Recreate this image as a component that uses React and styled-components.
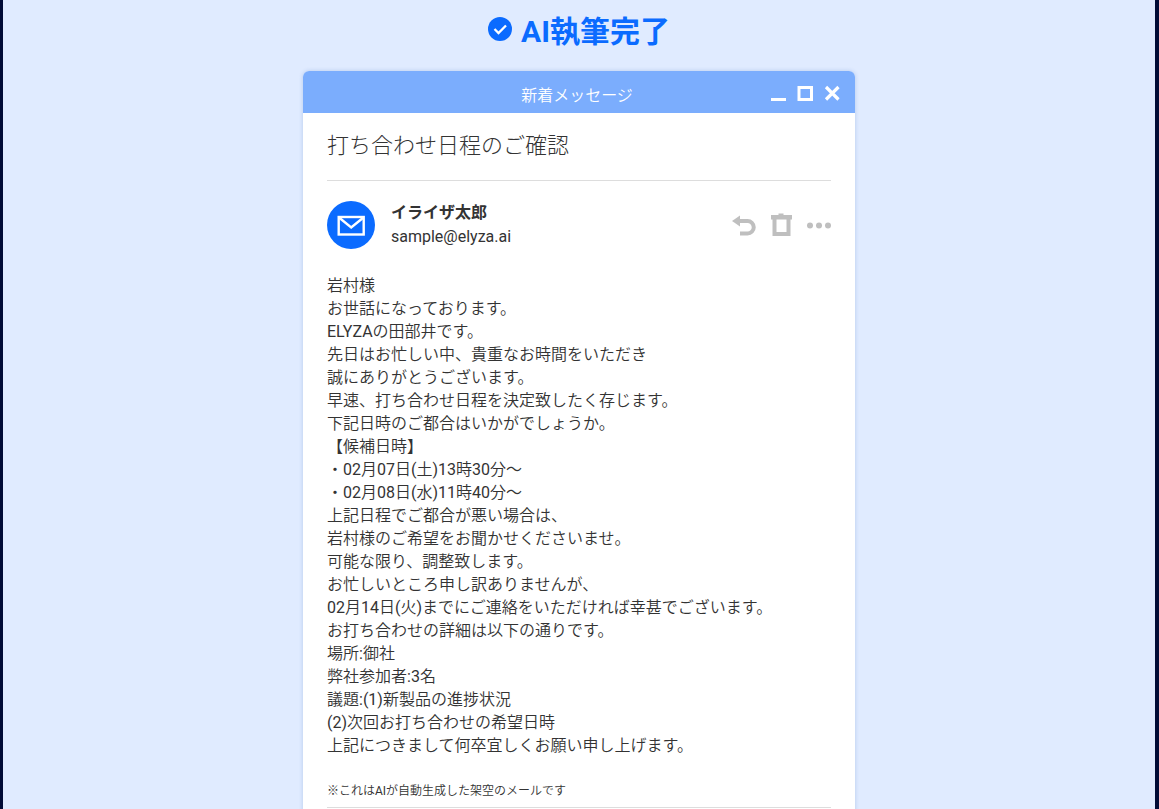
import React from "react";
import styled, { createGlobalStyle } from "styled-components";

const GlobalStyles = createGlobalStyle`
  * {
    box-sizing: border-box;
  }

  body {
    margin: 0;
    background: #000b36;
    color: #333;
    font-family: Roboto, "Noto Sans CJK JP", sans-serif;
    font-size: 16px;
  }
`;

const Page = styled.main`
  min-height: 100vh;
  margin: 0 4px 0 3px;
  padding: 8px 24px 0;
  background: #e0ebff;
`;

const Heading = styled.h1`
  display: flex;
  justify-content: center;
  gap: 8px;
  margin: 0 0 15px;
  color: #0b6bff;
  font-size: 30px;
  font-weight: 700;
  line-height: 48px;

  svg {
    margin-top: 9px;
  }
`;

const Card = styled.article`
  max-width: 552px;
  margin: 0 auto;
  background: #fff;
  border-radius: 6px;
  box-shadow: 0 0 4px rgba(40, 90, 180, 0.24);
  overflow: hidden;
`;

const TitleBar = styled.header`
  display: grid;
  grid-template-columns: 1fr auto 1fr;
  align-items: center;
  padding: 10px 15px 2px 11px;
  background: #7badfd;
  color: #fff;
`;

const BarTitle = styled.span`
  grid-column: 2;
  font-weight: 350;
  line-height: 30px;
`;

const Buttons = styled.div`
  display: flex;
  justify-content: flex-end;
  align-items: center;
  gap: ${(props) => props.$gap};
`;

const WindowButtons = styled(Buttons)`
  align-self: start;
  padding-top: 4px;
`;

const IconButton = styled.button`
  display: block;
  padding: 0;
  border: 0;
  background: none;
  color: inherit;
  cursor: pointer;

  svg {
    display: block;
  }
`;

const Content = styled.div`
  padding: 0 24px 24px;
`;

const Subject = styled.h2`
  margin: 0;
  padding: 17px 0 18px;
  border-bottom: 1px solid #ddd;
  font-size: 22px;
  font-weight: 300;
  line-height: 32px;
`;

const Sender = styled.div`
  display: flex;
  align-items: center;
  gap: 16px;
  padding: 20px 0 25px;
  color: #bfbfbf;
`;

const Address = styled.div`
  flex: 1;
  color: #333;
  line-height: 24px;

  strong,
  a {
    display: block;
  }

  a {
    color: inherit;
    text-decoration: none;
  }
`;

const Body = styled.div`
  line-height: 23px;

  p {
    margin: 0;
  }
`;

const Note = styled.p`
  margin: 0;
  padding: 24px 0 6px;
  border-bottom: 1px solid #ddd;
  font-size: 12px;
  line-height: 20px;
`;

// kanji and kana are set a little lighter than the latin letters
const Japanese = styled.span`
  font-weight: 350;
`;

const lines = [
  "岩村様",
  "お世話になっております。",
  "ELYZAの田部井です。",
  "先日はお忙しい中、貴重なお時間をいただき",
  "誠にありがとうございます。",
  "早速、打ち合わせ日程を決定致したく存じます。",
  "下記日時のご都合はいかがでしょうか。",
  "【候補日時】",
  "・02月07日(土)13時30分〜",
  "・02月08日(水)11時40分〜",
  "上記日程でご都合が悪い場合は、",
  "岩村様のご希望をお聞かせくださいませ。",
  "可能な限り、調整致します。",
  "お忙しいところ申し訳ありませんが、",
  "02月14日(火)までにご連絡をいただければ幸甚でございます。",
  "お打ち合わせの詳細は以下の通りです。",
  "場所:御社",
  "弊社参加者:3名",
  "議題:(1)新製品の進捗状況",
  "(2)次回お打ち合わせの希望日時",
  "上記につきまして何卒宜しくお願い申し上げます。",
];

function Text({ children }) {
  return children
    .split(/([\x20-\x7e]+)/)
    .filter(Boolean)
    .map((part, i) =>
      /[\x20-\x7e]/.test(part) ? part : <Japanese key={i}>{part}</Japanese>
    );
}

function CheckIcon() {
  return (
    <svg width="25" height="25" viewBox="0 0 25 25" aria-hidden="true">
      <circle cx="12" cy="12" r="12" fill="currentColor" />
      <path d="M6.500 12l4 4 7.500-7.500" fill="none" stroke="#fff" strokeWidth="2.3" />
    </svg>
  );
}

function MinimizeIcon() {
  return (
    <svg width="15" height="16" viewBox="0 0 15 16" aria-hidden="true">
      <path d="M0 13h15v3H0z" fill="currentColor" />
    </svg>
  );
}

function MaximizeIcon() {
  return (
    <svg width="16" height="16" viewBox="0 0 16 16" aria-hidden="true">
      <path d="M2 2.500h12.500v12H2z" fill="none" stroke="currentColor" strokeWidth="3" />
    </svg>
  );
}

function CloseIcon() {
  return (
    <svg width="16" height="16" viewBox="0 0 16 16" aria-hidden="true">
      <path
        d="M2 2l12.500 12.500m0-12.500L2 14.500"
        stroke="currentColor"
        strokeWidth="3.2"
      />
    </svg>
  );
}

function MailIcon() {
  return (
    <svg width="48" height="48" viewBox="0 0 48 48" aria-hidden="true">
      <circle cx="24" cy="24" r="24" fill="#0b6bff" />
      <g fill="none" stroke="#fff" strokeWidth="2.4">
        <rect x="11.700" y="16" width="25" height="17.500" />
        <path d="M12 16.500l12.200 10L36.500 16.500" />
      </g>
    </svg>
  );
}

function ReplyIcon() {
  return (
    <svg width="24" height="24" viewBox="0 0 24 24" aria-hidden="true">
      <path d="M0 8L8 2.500v11z" fill="currentColor" />
      <path
        d="M7 8h8.500a6.200 6.200 0 0 1 0 12.500H8"
        fill="none"
        stroke="currentColor"
        strokeWidth="4"
      />
    </svg>
  );
}

function TrashIcon() {
  return (
    <svg width="22" height="24" viewBox="0 0 22 24" aria-hidden="true">
      <path
        fill="currentColor"
        fillRule="evenodd"
        d="M8.500.5h5V2H22v4.500h-1.500V23H2.500V6.500H1V2h7.500zM6.500 6.500V19h10V6.500z"
      />
    </svg>
  );
}

function MoreIcon() {
  return (
    <svg width="25" height="24" viewBox="0 0 25 24" aria-hidden="true">
      <g fill="currentColor">
        <circle cx="4" cy="12.500" r="3" />
        <circle cx="13" cy="12.500" r="3" />
        <circle cx="22" cy="12.500" r="3" />
      </g>
    </svg>
  );
}

function App() {
  return (
    <>
      <GlobalStyles />
      <Page lang="ja">
        <Heading>
          <CheckIcon />
          AI執筆完了
        </Heading>
        <Card>
          <TitleBar>
            <BarTitle>新着メッセージ</BarTitle>
            <WindowButtons $gap="11px">
              <IconButton type="button" aria-label="最小化">
                <MinimizeIcon />
              </IconButton>
              <IconButton type="button" aria-label="最大化">
                <MaximizeIcon />
              </IconButton>
              <IconButton type="button" aria-label="閉じる">
                <CloseIcon />
              </IconButton>
            </WindowButtons>
          </TitleBar>
          <Content>
            <Subject>打ち合わせ日程のご確認</Subject>
            <Sender>
              <MailIcon />
              <Address>
                <strong>イライザ太郎</strong>
                <a href="mailto:sample@elyza.ai">sample@elyza.ai</a>
              </Address>
              <Buttons $gap="14px">
                <IconButton type="button" aria-label="返信">
                  <ReplyIcon />
                </IconButton>
                <IconButton type="button" aria-label="削除">
                  <TrashIcon />
                </IconButton>
                <IconButton type="button" aria-label="その他">
                  <MoreIcon />
                </IconButton>
              </Buttons>
            </Sender>
            <Body>
              {lines.map((line) => (
                <p key={line}>
                  <Text>{line}</Text>
                </p>
              ))}
            </Body>
            <Note>
              <Text>※これはAIが自動生成した架空のメールです</Text>
            </Note>
          </Content>
        </Card>
      </Page>
    </>
  );
}

export default App;
